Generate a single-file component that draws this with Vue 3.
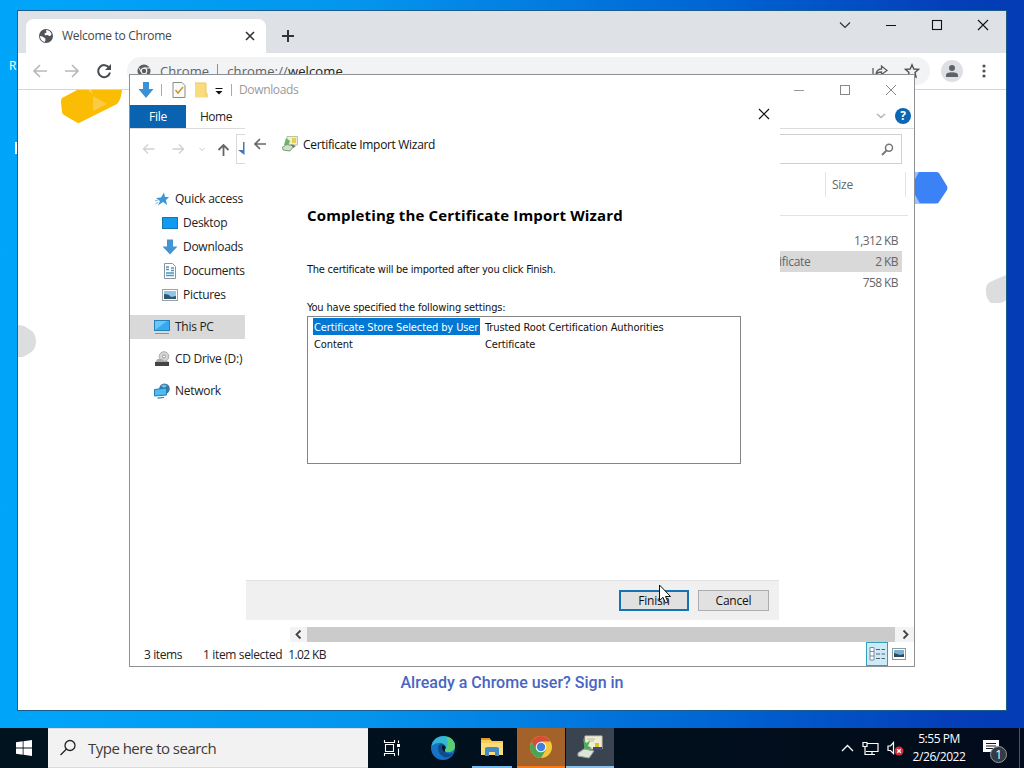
<script setup>
    import { ref } from 'vue';

    const places = ref([
    { name: 'Quick access', icon: 'star' },
    { name: 'Desktop', icon: 'desktop', child: true },
    { name: 'Downloads', icon: 'download', child: true },
    { name: 'Documents', icon: 'document', child: true },
    { name: 'Pictures', icon: 'picture', child: true },
    { name: 'This PC', icon: 'pc', active: true, gap: true },
    { name: 'CD Drive (D:)', icon: 'disc', gap: true },
    { name: 'Network', icon: 'network', gap: true }
    ]);

    const files = ref([
    { type: '', size: '1,312 KB' },
    { type: 'ificate', size: '2 KB', selected: true },
    { type: '', size: '758 KB' }
    ]);

    const settings = ref([
    { key: 'Certificate Store Selected by User', value: 'Trusted Root Certification Authorities', selected: true },
    { key: 'Content', value: 'Certificate' }
    ]);
</script>

<template>
  <div class="desktop">
    <span class="desk-label label-r">R</span>
    <span class="desk-label label-i"></span>

    <!-- browser -->
    <section class="window browser">
      <div class="tab-strip">
        <div class="tab">
          <svg width="16" height="16" viewBox="0 0 16 16">
            <circle cx="8" cy="8" r="7" fill="#505357" />
            <path d="M2 8 Q5 8 6 9.5 Q8 10 7.4 12 L7 14 Q2 13 2 8 M8 2 Q12 2 13.5 6 Q13 8.500 11 8 L10 7 L7 7.200 L6.500 5.500 L8.500 4.500 Z" fill="#fff" />
          </svg>
          <span class="tab-title">Welcome to Chrome</span>
          <svg width="10" height="10" viewBox="0 0 10 10"><path d="M1 1 L9 9 M9 1 L1 9" stroke="#333" stroke-width="1.6" /></svg>
        </div>
        <svg class="new-tab" width="14" height="14" viewBox="0 0 14 14"><path d="M7 1 V13 M1 7 H13" stroke="#333" stroke-width="2" /></svg>
        <div class="controls">
          <svg width="12" height="12" viewBox="0 0 12 12"><path d="M1 3.500 L6 8.500 L11 3.500" fill="none" stroke="#333" stroke-width="1.2" /></svg>
          <svg width="12" height="12" viewBox="0 0 12 12"><path d="M1 6.500 H11" stroke="#111" /></svg>
          <svg width="12" height="12" viewBox="0 0 12 12"><rect x="1.500" y="1.500" width="9" height="9" fill="none" stroke="#111" stroke-width="1.100" /></svg>
          <svg width="12" height="12" viewBox="0 0 12 12"><path d="M1 1 L11 11 M11 1 L1 11" stroke="#111" stroke-width="1.100" /></svg>
        </div>
      </div>
      <div class="toolbar">
        <svg width="16" height="16" viewBox="0 0 16 16"><path d="M15 8 H2 M8 2 L2 8 L8 14" fill="none" stroke="#b9b9b9" stroke-width="1.700" /></svg>
        <svg width="16" height="16" viewBox="0 0 16 16"><path d="M1 8 H14 M8 2 L14 8 L8 14" fill="none" stroke="#b9b9b9" stroke-width="1.700" /></svg>
        <svg width="16" height="16" viewBox="0 0 16 16"><path d="M13.300 5 A6 6 0 1 0 14 9.500" fill="none" stroke="#4a4d51" stroke-width="2" /><path d="M15 1 V7 H9 Z" fill="#4a4d51" /></svg>
        <div class="omnibox">
          <svg width="14" height="14" viewBox="0 0 14 14">
            <circle cx="7" cy="7" r="6.500" fill="#5a5d61" />
            <circle cx="7" cy="7" r="2.800" fill="none" stroke="#f1f3f4" stroke-width="1.200" />
            <path d="M7 4 H13 M4.500 8.500 L2 4 M9.500 8.500 L7 13" stroke="#f1f3f4" />
          </svg>
          <span class="site">Chrome</span>
          <i class="site-line"></i>
          <span class="url">chrome://<b>welcome</b></span>
          <svg class="share" width="18" height="16" viewBox="0 0 18 16"><path d="M2 5 V14 H13 M5 11 Q6 6 10.500 6 V3 L16 7.500 L10.500 11.500 V9 Q7 9 5 11 Z" fill="none" stroke="#5a5d61" stroke-width="1.300" /></svg>
          <svg class="fav" width="16" height="16" viewBox="0 0 16 16"><path d="M8 1.800 L9.800 6 L14.500 6.400 L11 9.400 L12 14 L8 11.500 L4 14 L5 9.400 L1.500 6.400 L6.200 6 Z" fill="none" stroke="#505357" stroke-width="1.400" /></svg>
        </div>
        <div class="avatar">
          <svg width="14" height="14" viewBox="0 0 14 14"><circle cx="7" cy="4" r="3" fill="#5f6368" /><path d="M1 13 V11 Q1 8.300 7 8.300 T13 11 V13 Z" fill="#5f6368" /></svg>
        </div>
        <svg class="dots" width="4" height="14" viewBox="0 0 4 14"><circle cx="2" cy="2" r="1.600" /><circle cx="2" cy="7" r="1.600" /><circle cx="2" cy="12" r="1.600" /></svg>
      </div>
      <div class="page">
        <svg class="art" width="988" height="620" viewBox="18 90 988 620">
          <path d="M77 90 L62 98 Q61 99 61 102 L62 112 Q62 114 64 115 L76 122 Q78 124 81 122 L117 104 Q121 100 122 90 Z" fill="#fbbc04" />
          <path d="M93 96 L107 104 L93 111 Z" fill="#fccb45" />
          <path d="M88 90 L93 94 L91 90 Z" fill="#fdd469" />
          <path d="M900 172 H936 Q938 172 939 173 L947 186 Q948 188 947 190 L939 202 Q938 203.500 936 203.500 H900 Z" fill="#3b82f6" />
          <path d="M914 172 H919 L914 181 Z M914 193 L920 203.500 H914 Z" fill="#9cc1fb" />
          <path d="M18 325 L24 326 L32 331 Q36 335 36 342 Q36 349 30 353 L23 357 H18 Z" fill="#dcddde" />
          <path d="M1006 275 L990 282 Q985 285 986 292 Q986 299 991 303 H1000 Q1005 302 1006 300 Z" fill="#dcddde" />
        </svg>
        <a class="sign-in">Already a Chrome user? Sign in</a>
      </div>
    </section>

    <!-- file explorer -->
    <section class="window explorer">
      <div class="ex-title">
        <svg width="16" height="18" viewBox="0 0 16 18"><path d="M5 1 H11 V8 H15.500 L8 17 L0.500 8 H5 Z" fill="#3a91d6" /></svg>
        <i class="sep"></i>
        <svg width="14" height="16" viewBox="0 0 14 16"><path d="M1 0.500 H10 L13 3.500 V15.500 H1 Z" fill="#fafafa" stroke="#8b8b8b" /><path d="M3.500 8 L6 11 L11 5" fill="none" stroke="#c49a28" stroke-width="1.500" /></svg>
        <svg width="15" height="16" viewBox="0 0 15 16"><path d="M1 1 H12 V10 L14 12 V15.500 H1 Z" fill="#fbdc7c" /><path d="M1 1 H12 V15" fill="none" stroke="#efc75f" /></svg>
        <svg class="caret" width="8" height="8" viewBox="0 0 8 8"><path d="M0.500 1.500 H7.500" stroke="#111" /><path d="M0.500 4 H7.500 L4 7.500 Z" fill="#111" /></svg>
        <i class="sep near"></i>
        <span class="ex-name">Downloads</span>
        <div class="ex-controls">
          <svg width="12" height="12" viewBox="0 0 12 12"><path d="M1 6.500 H11" stroke="#999" /></svg>
          <svg width="12" height="12" viewBox="0 0 12 12"><rect x="1.500" y="1.500" width="9" height="9" fill="none" stroke="#888" /></svg>
          <svg width="12" height="12" viewBox="0 0 12 12"><path d="M1 1 L11 11 M11 1 L1 11" stroke="#888" /></svg>
        </div>
      </div>
      <div class="ribbon">
        <span class="file-tab">File</span>
        <span class="home-tab">Home</span>
        <div class="ribbon-end">
          <svg width="10" height="8" viewBox="0 0 10 8"><path d="M1 2 L5 5.500 L9 2" fill="none" stroke="#b4b4b4" stroke-width="1.500" /></svg>
          <span class="help">?</span>
        </div>
      </div>
      <div class="address">
        <svg width="13" height="12" viewBox="0 0 13 12"><path d="M12.500 6 H1.500 M6 1.500 L1.500 6 L6 10.500" fill="none" stroke="#d0d0d0" stroke-width="1.300" /></svg>
        <svg width="13" height="12" viewBox="0 0 13 12"><path d="M0.500 6 H11.500 M7 1.500 L11.500 6 L7 10.500" fill="none" stroke="#d0d0d0" stroke-width="1.300" /></svg>
        <svg class="recent" width="6" height="5" viewBox="0 0 6 5"><path d="M0.500 1 L3 3.500 L5.500 1" fill="none" stroke="#c4c4c4" /></svg>
        <svg width="13" height="14" viewBox="0 0 13 14"><path d="M6.500 14 V3 M1.500 8 L6.500 3 L11.500 8" fill="none" stroke="#666" stroke-width="1.800" /></svg>
        <div class="path-box">
          <svg width="8" height="16" viewBox="0 0 8 16"><path d="M7.500 1 V14 L1 9 H6 V1 Z" fill="#4674b8" /></svg>
        </div>
        <div class="search-box">
          <svg width="13" height="13" viewBox="0 0 13 13"><circle cx="8" cy="4.700" r="3.500" fill="none" stroke="#777" stroke-width="1.500" /><path d="M5.500 7.500 L1 12" stroke="#777" stroke-width="1.800" /></svg>
        </div>
      </div>
      <div class="ex-body">
        <nav class="tree">
          <div v-for="place in places" :key="place.name" class="place" :class="{ child: place.child, active: place.active, gap: place.gap }">
            <svg v-if="place.icon === 'star'" width="16" height="16" viewBox="0 0 16 16"><path d="M10 1.500 L11 6 L15 6 L12 9 L13 14 L9 11 L4 14.500 L6 10 L2 7 L7 6.500 Z" fill="#3c96d8" /><path d="M1 10 L4 9 M1.500 13 L4.500 11" stroke="#7ab9e4" /></svg>
            <svg v-else-if="place.icon === 'desktop'" width="16" height="16" viewBox="0 0 16 16"><rect x="0.500" y="2.500" width="15" height="11" fill="#119bf0" stroke="#1676b4" /></svg>
            <svg v-else-if="place.icon === 'download'" width="16" height="16" viewBox="0 0 16 16"><path d="M5 0.500 H11 V7.500 H15.500 L8 15.500 L0.500 7.500 H5 Z" fill="#4494d2" /></svg>
            <svg v-else-if="place.icon === 'document'" width="16" height="16" viewBox="0 0 16 16"><path d="M2.500 0.500 H10.500 L13.500 3.500 V15.500 H2.500 Z" fill="#fff" stroke="#8a949c" /><path d="M4 4 H7 M9 5 H12 M4 6.500 H7 M9 7.500 H12 M4 10 H12 M4 12.500 H12" stroke="#4a94c8" stroke-width="1.300" /></svg>
            <svg v-else-if="place.icon === 'picture'" width="16" height="16" viewBox="0 0 16 16"><rect x="0.500" y="2.500" width="15" height="11" fill="#fff" stroke="#98a3aa" /><rect x="2" y="4" width="12" height="8" fill="#8fc5e8" /><path d="M2 7 Q7 7 9 10 L14 9 V12 H2 Z" fill="#31576d" /></svg>
            <svg v-else-if="place.icon === 'pc'" width="16" height="16" viewBox="0 0 16 16"><rect x="0.500" y="1.500" width="15" height="10" fill="#36aaf0" stroke="#2581b7" /><path d="M1 11 L13 2 H1 Z" fill="#6bc6f8" /><path d="M1 14.500 H15" stroke="#7796a8" /></svg>
            <svg v-else-if="place.icon === 'disc'" width="16" height="16" viewBox="0 0 16 16"><circle cx="10" cy="5.500" r="4.800" fill="#d4d5d5" stroke="#aaa" /><circle cx="10" cy="5.500" r="1.500" fill="#fff" stroke="#999" /><path d="M3.500 8 H8 L10 10 H14 L15 11.500 H1 Z" fill="#ababab" /><rect x="1" y="11" width="14" height="4" fill="#444" /></svg>
            <svg v-else width="16" height="16" viewBox="0 0 16 16"><circle cx="10.500" cy="5.800" r="5.300" fill="#3579b0" /><path d="M7 3 Q10 0 13 3 L10 5 Z" fill="#7fb9dd" /><path d="M0.500 6.500 L12.500 5 V12 L0.500 13 Z" fill="#4cbcf5" stroke="#2879ac" /><path d="M3.500 15.200 L10 14.500" stroke="#2879ac" stroke-width="1.200" /></svg>
            <span>{{ place.name }}</span>
          </div>
        </nav>
        <div class="file-list">
          <div class="list-head"><span>Size</span></div>
          <div class="rows">
            <div v-for="file in files" :key="file.size" class="row" :class="{ selected: file.selected }">
              <span>{{ file.type }}</span>
              <span class="size">{{ file.size }}</span>
            </div>
          </div>
        </div>
      </div>
      <div class="scroll">
        <svg width="17" height="15" viewBox="0 0 17 15"><path d="M10.500 3.500 L6.500 7.500 L10.500 11.500" fill="none" stroke="#444" stroke-width="1.800" /></svg>
        <div class="thumb"></div>
        <svg width="19" height="15" viewBox="0 0 19 15"><path d="M8.500 3.500 L12.500 7.500 L8.500 11.500" fill="none" stroke="#444" stroke-width="1.800" /></svg>
      </div>
      <div class="status">
        <span class="count">3 items</span>
        <span class="chosen">1 item selected</span>
        <span class="weight">1.02 KB</span>
        <div class="views">
          <span class="view-on">
            <svg width="17" height="14" viewBox="0 0 17 14"><path d="M1 0.500 H5 V13 H1 Z M1 4.500 H5 M1 9 H5" fill="#fff" stroke="#7b8e98" /><path d="M7 2.500 H11 M12.500 2.500 H16 M7 7 H11 M12.500 7 H16 M7 11.500 H11 M12.500 11.500 H16" stroke="#54636b" /></svg>
          </span>
          <svg width="14" height="12" viewBox="0 0 14 12"><rect x="0.500" y="0.500" width="13" height="11" fill="#fff" stroke="#8b9ba6" /><rect x="2" y="2" width="10" height="7" fill="#7aaed2" /><path d="M2 5 L8 7 L12 6 V9 H2 Z" fill="#2c4a59" /></svg>
        </div>
      </div>
    </section>

    <!-- certificate wizard -->
    <section class="window wizard">
      <div class="wiz-close">
        <svg width="12" height="12" viewBox="0 0 12 12"><path d="M1 1 L11 11 M11 1 L1 11" stroke="#111" stroke-width="1.200" /></svg>
      </div>
      <div class="wiz-title">
        <svg width="14" height="12" viewBox="0 0 14 12"><path d="M13 6 H2 M7 1 L2 6 L7 11" fill="none" stroke="#666" stroke-width="1.700" /></svg>
        <svg class="wiz-icon" width="16" height="16" viewBox="0 0 16 16">
          <path d="M5 0.500 H15.500 V9 H5 Z" fill="#eef0d0" stroke="#b9c4a5" />
          <path d="M10 2 H14 V7 H10 Z" fill="#e5cf57" />
          <path d="M4 2 L8 5 L6 10 L2 9 Z" fill="#6bb567" />
          <path d="M0.500 11 L5 8.500 L12 10 L8 15 L1 14 Z" fill="#d3ddd0" stroke="#78a07a" />
          <path d="M9 8 L14 10 L11 12 Z" fill="#6f805f" />
        </svg>
        <span>Certificate Import Wizard</span>
      </div>
      <div class="wiz-body">
        <h2>Completing the Certificate Import Wizard</h2>
        <p class="info">The certificate will be imported after you click Finish.</p>
        <p class="caption">You have specified the following settings:</p>
        <div class="settings">
          <div v-for="item in settings" :key="item.key" class="setting">
            <span class="key"><span :class="{ picked: item.selected }">{{ item.key }}</span></span>
            <span>{{ item.value }}</span>
          </div>
        </div>
      </div>
      <div class="wiz-footer">
        <button class="finish" type="button">Finish</button>
        <button type="button">Cancel</button>
      </div>
    </section>

    <footer class="taskbar">
      <div class="start">
        <svg width="16" height="16" viewBox="0 0 16 16"><path d="M0 2.300 L6.700 1.300 V7.500 H0 Z M7.500 1.200 L16 0 V7.500 H7.500 Z M0 8.400 H6.700 V14.700 L0 13.700 Z M7.500 8.400 H16 V16 L7.500 14.800 Z" fill="#fff" /></svg>
      </div>
      <div class="search">
        <svg width="18" height="18" viewBox="0 0 18 18"><circle cx="11" cy="6.500" r="5" fill="none" stroke="#222" stroke-width="1.300" /><path d="M7.500 10 L1.500 16" stroke="#222" stroke-width="1.300" /></svg>
        <span>Type here to search</span>
      </div>
      <div class="task">
        <svg width="18" height="16" viewBox="0 0 18 16"><path d="M1.500 0 V2.500 H11.500 V0 M1.500 16 V13.500 H11.500 V16 M2.500 4.500 H10.500 V11.500 H2.500 Z M15.500 0.500 V3 M15.500 8.500 V15.500" fill="none" stroke="#fff" stroke-width="1.100" /><rect x="14" y="4" width="3" height="3" fill="#fff" /></svg>
      </div>
      <div class="task edge">
        <svg width="24" height="24" viewBox="0 0 24 24">
          <circle cx="12" cy="12" r="12" fill="#1672c4" />
          <path d="M0.500 10 Q3 0 13 0 Q24 1 24 11 Q23 16 17 16 Q14 16 14 14 Q16 9 11 7 Q5 6 0.500 10 Z" fill="#35b7d3" />
          <path d="M15 0.500 Q24 2 24 11 Q23 16 17 16 Q14 16 14 14 Q19 9 15 0.500 Z" fill="#59cf73" />
          <path d="M7 12 Q7 8 11 8 Q15 9 14.500 12 Q13 14 14 16 Q17 19 22 17 Q18 23 13 21 Q7 18 7 12 Z" fill="#124b87" />
          <path d="M11 10 Q15 9 14.500 12 Q13 14 14 16 Q11 15 11 10 Z" fill="#001522" />
        </svg>
      </div>
      <div class="task line">
        <svg width="22" height="20" viewBox="0 0 22 20"><path d="M0 2 H9 L11 4 H22 V17 H0 Z" fill="#f7cd58" /><path d="M0 1 H9 V3 H0 Z" fill="#df9d25" /><path d="M0 6 H22 V18 H0 Z" fill="#fbdc7b" /><path d="M4 11 L6 10 H16 L18 11 V19 H14 V15 H8 V19 H4 Z" fill="#438bc6" /></svg>
      </div>
      <div class="task chrome">
        <svg width="22" height="22" viewBox="0 0 22 22">
          <circle cx="11" cy="11" r="11" fill="#f6c63b" />
          <path d="M1.500 5.500 A11 11 0 0 1 20.500 5.500 H11 L6 14 Z" fill="#d94b3b" />
          <path d="M1.500 5.500 A11 11 0 0 0 11 22 L16 13.500 L6.300 13.800 Z" fill="#48a557" />
          <circle cx="11" cy="11" r="5.300" fill="#f4f6fb" />
          <circle cx="11" cy="11" r="4.200" fill="#4380dc" />
        </svg>
      </div>
      <div class="task cert">
        <svg width="26" height="24" viewBox="0 0 26 24">
          <path d="M8 1 H25 V14 H8 Z" fill="#eeeed8" stroke="#c8c8aa" />
          <path d="M10 4 H18 M11 6 H17" stroke="#b7bd9b" />
          <path d="M18 8 H22 V14 H18 Z" fill="#ddbf2a" />
          <path d="M16 12 H25 V15 H16 Z" fill="#42457f" />
          <path d="M6 3 L9 8 L13 6 L11 11 L15 13 L8 16 Z" fill="#4ead57" />
          <path d="M1 18 L7 14 L17 16 L12 23 L1 21 Z" fill="#dfe4dd" stroke="#95a497" />
        </svg>
      </div>
      <div class="tray">
        <svg width="13" height="8" viewBox="0 0 13 8"><path d="M1 7 L6.500 1.500 L12 7" fill="none" stroke="#fff" stroke-width="1.300" /></svg>
        <svg width="17" height="15" viewBox="0 0 17 15"><path d="M5 2.500 H16 V10.500 H4 M10 10.500 V13.500 M6 13.500 H13 M1 1.500 H5 V5.500 H1 Z M3 5.500 V13.500 H6" fill="none" stroke="#fff" stroke-width="1.200" /></svg>
        <svg width="17" height="15" viewBox="0 0 17 15"><path d="M1 5 H3.500 L6.500 1.500 V12.500 L3.500 9.500 H1 Z" fill="none" stroke="#fff" stroke-width="1.200" /><circle cx="12" cy="10" r="4.500" fill="#d1303c" /><path d="M10.200 8.200 L13.800 11.800 M13.800 8.200 L10.200 11.800" stroke="#fff" stroke-width="1.300" /></svg>
      </div>
      <div class="clock">
        <span>5:55 PM</span>
        <span class="date">2/26/2022</span>
      </div>
      <div class="notes">
        <svg width="16" height="16" viewBox="0 0 16 16"><path d="M0 0 H16 V12 H13 L10 15.500 V12 H0 Z" fill="#fff" /><path d="M3 3.500 H13 M3 6 H13 M3 8.500 H10" stroke="#111a26" /></svg>
        <span class="badge">1</span>
      </div>
      <i class="peek"></i>
    </footer>

    <svg class="cursor" width="14" height="21" viewBox="0 0 14 21"><path d="M1.500 1 V16.500 L5 13.300 L7.500 19 L10 18 L7.500 12.500 H12.500 Z" fill="#fff" stroke="#111" /></svg>
  </div>
</template>

<style>
  body {
    margin: 0;
  }
</style>

<style scoped>
  .desktop {
    position: relative;
    width: 1024px;
    height: 768px;
    overflow: hidden;
    display: flex;
    flex-direction: column;
    justify-content: flex-end;
    background: linear-gradient(90deg, #00a6fa 0%, #0495ee 35%, #0062d2 72%, #043fb9 92%, #033cb4 100%);
    font-family: "Open Sans", "Noto Sans", sans-serif;
    font-size: 12px;
    letter-spacing: -0.28px;
    color: #222;
  }

  svg {
    display: block;
    flex-shrink: 0;
  }

  .desk-label {
    position: absolute;
    color: #fff;
  }

  .label-r {
    left: 9px;
    top: 57px;
  }

  .label-i {
    left: 15px;
    top: 142px;
    width: 2px;
    height: 12px;
    background: #fff;
  }

  .window {
    position: absolute;
    box-sizing: border-box;
    display: flex;
    flex-direction: column;
    background: #fff;
  }

  /* browser */
  .browser {
    left: 17px;
    top: 10px;
    width: 990px;
    height: 701px;
    border: 1px solid #1b5c8c;
  }

  .tab-strip {
    display: flex;
    height: 42px;
    background: #dee1e6;
    padding-left: 8px;
  }

  .tab {
    display: flex;
    align-items: center;
    box-sizing: border-box;
    width: 240px;
    height: 34px;
    margin-top: 8px;
    padding: 0 11px 0 12px;
    background: #fff;
    border-radius: 8px 8px 0 0;
  }

  .tab-title {
    flex: 1;
    margin-left: 8px;
    padding-bottom: 2px;
    color: #454749;
  }

  .new-tab {
    margin: 18px 0 0 15px;
  }

  .controls {
    display: flex;
    gap: 34px;
    margin: 8px 17px 0 auto;
  }

  .toolbar {
    display: flex;
    align-items: center;
    height: 36px;
    padding-left: 14px;
    border-bottom: 1px solid #d4d6d8;
    gap: 16px;
  }

  .omnibox {
    display: flex;
    align-items: center;
    box-sizing: border-box;
    width: 803px;
    height: 28px;
    margin-left: -1px;
    padding: 0 10px;
    border-radius: 14px;
    background: #f1f3f4;
    font-size: 13px;
    color: #5f6368;
  }

  .site {
    margin-left: 9px;
    letter-spacing: 0.1px;
  }

  .site-line {
    width: 1px;
    height: 15px;
    margin: 0 9px 0 8px;
    background: #8a8d91;
  }

  .url {
    letter-spacing: 0.12px;
  }

  .url b {
    font-weight: 400;
    color: #222;
  }

  .share {
    margin-left: auto;
  }

  .fav {
    margin-left: 15px;
  }

  .avatar {
    display: flex;
    align-items: center;
    justify-content: center;
    width: 22px;
    height: 22px;
    margin-left: -5px;
    border-radius: 50%;
    background: #dee0e6;
  }

  .dots {
    margin-left: 3px;
    fill: #505357;
  }

  .page {
    position: relative;
    flex: 1;
    display: flex;
    align-items: flex-end;
    justify-content: center;
  }

  .art {
    position: absolute;
    left: 0;
    top: 0;
  }

  .sign-in {
    margin-bottom: 17px;
    font: 500 16px/20px Roboto, sans-serif;
    letter-spacing: 0;
    color: #4765c2;
  }

  /* explorer */
  .explorer {
    left: 129px;
    top: 74px;
    width: 786px;
    height: 593px;
    border: 1px solid #8d9196;
  }

  .ex-title {
    display: flex;
    align-items: center;
    height: 29px;
    padding: 0 0 1px 8px;
  }

  .sep {
    width: 1px;
    height: 12px;
    margin: 0 10px 0 7px;
    background: #aaa;
  }

  .ex-title svg + svg {
    margin-left: 8px;
  }

  .ex-title .caret {
    margin: 2px 0 0 6px;
  }

  .sep.near {
    margin: 0 7px 0 8px;
  }

  .ex-name {
    color: #999;
    letter-spacing: -0.35px;
  }

  .ex-controls {
    display: flex;
    gap: 34px;
    margin: 0 17px 0 auto;
  }

  .ex-title .ex-controls svg {
    margin-left: 0;
  }

  .ribbon {
    display: flex;
    height: 23px;
    line-height: 23px;
    border-bottom: 1px solid #dcdcdc;
  }

  .file-tab {
    width: 56px;
    text-align: center;
    background: #0a63b1;
    color: #fff;
  }

  .home-tab {
    margin-left: 14px;
    letter-spacing: -0.9px;
    letter-spacing: -0.8px;
    letter-spacing: -0.5px;
  }

  .ribbon-end {
    display: flex;
    align-items: center;
    gap: 9px;
    margin: 0 3px 1px auto;
  }

  .help {
    width: 16px;
    height: 16px;
    border-radius: 50%;
    background: #0c66b3;
    color: #fff;
    font-weight: 700;
    line-height: 16px;
    text-align: center;
  }

  .address {
    display: flex;
    align-items: center;
    height: 40px;
    padding: 0 12px;
  }

  .address > svg + svg {
    margin-left: 17px;
  }

  .address > svg.recent {
    margin-left: 14px;
  }

  .address > .recent + svg {
    margin-left: 12px;
  }

  .path-box {
    display: flex;
    align-items: center;
    box-sizing: border-box;
    width: 60px;
    height: 30px;
    margin-left: 6px;
    border: 1px solid #d9d9d9;
  }

  .search-box {
    display: flex;
    align-items: center;
    justify-content: flex-end;
    box-sizing: border-box;
    width: 220px;
    height: 30px;
    margin-left: auto;
    padding-right: 7px;
    border: 1px solid #d0d0d0;
  }

  .ex-body {
    flex: 1;
    display: flex;
    justify-content: space-between;
  }

  .tree {
    width: 115px;
    padding-top: 18px;
  }

  .place {
    display: flex;
    align-items: center;
    height: 24px;
    padding-left: 24px;
    gap: 5px;
    white-space: nowrap;
  }

  .place span {
    padding-bottom: 2px;
  }

  .place.child {
    padding-left: 32px;
  }

  .place.gap {
    margin-top: 8px;
  }

  .active {
    background: #d9d9d9;
  }

  .file-list {
    width: 140px;
    color: #666;
  }

  .list-head {
    display: flex;
    box-sizing: border-box;
    height: 47px;
    margin-right: 6px;
    border-bottom: 1px solid #e3e3e3;
  }

  .list-head span {
    box-sizing: border-box;
    width: 81px;
    height: 25px;
    margin: 3px 2px 0 auto;
    padding-left: 6px;
    line-height: 25px;
    border: solid #e2e2e2;
    border-width: 0 1px;
  }

  .rows {
    margin: 14px 12px 0 0;
  }

  .row {
    display: flex;
    justify-content: space-between;
    padding: 0 4px 0 5px;
    line-height: 21px;
  }

  .size {
    letter-spacing: -0.6px;
  }

  .selected {
    background: #d9d9d9;
  }

  .scroll {
    display: flex;
    height: 15px;
    margin-left: 160px;
    background: #f3f3f3;
  }

  .thumb {
    flex: 1;
    background: #cbcbcb;
  }

  .status {
    display: flex;
    align-items: center;
    height: 24px;
    padding-left: 14px;
  }

  .count {
    letter-spacing: -0.4px;
  }

  .chosen {
    margin-left: 21px;
    letter-spacing: -0.36px;
  }

  .weight {
    margin-left: 6px;
    letter-spacing: -0.6px;
  }

  .views {
    display: flex;
    align-items: center;
    gap: 4px;
    margin: 0 8px 0 auto;
  }

  .view-on {
    display: flex;
    align-items: center;
    justify-content: center;
    width: 20px;
    height: 22px;
    border: 1px solid #35a0be;
    background: #cdeaf8;
  }

  /* wizard */
  .wizard {
    left: 245px;
    top: 97px;
    width: 535px;
    height: 524px;
    border: solid #fff;
    border-width: 0 1px 1px;
  }

  .wiz-close {
    display: flex;
    justify-content: flex-end;
    height: 23px;
    padding: 11px 9px 0 0;
  }

  .wiz-title {
    display: flex;
    align-items: center;
    height: 26px;
    padding: 0 0 2px 7px;
    color: #111;
  }

  .wiz-title span {
    letter-spacing: -0.32px;
  }

  .wiz-icon {
    margin: 0 5px 0 15px;
  }

  .wiz-body {
    flex: 1;
    padding: 43px 38px 0 61px;
    color: #111;
    font-family: "DejaVu Sans Condensed", "DejaVu Sans", sans-serif;
    font-size: 11px;
  }

  .wiz-body h2 {
    margin: 0;
    font: 700 15px/26px "Open Sans", sans-serif;
    letter-spacing: 0.17px;
    white-space: nowrap;
    color: #000;
  }

  .wiz-body p {
    margin: 0;
    line-height: 16px;
  }

  .wiz-body .info {
    margin-top: 34px;
    letter-spacing: -0.24px;
  }

  .wiz-body .caption {
    margin-top: 22px;
    letter-spacing: -0.15px;
  }

  .settings {
    box-sizing: border-box;
    height: 148px;
    padding: 1px 5px;
    border: 1px solid #858585;
    letter-spacing: -0.1px;
  }

  .setting {
    display: flex;
    height: 17px;
    line-height: 19px;
    white-space: nowrap;
  }

  .key {
    width: 172px;
  }

  .key span {
    display: inline-block;
    height: 17px;
    padding: 0 2px 0 1px;
  }

  .key .picked {
    background: #0078d4;
    color: #fff;
  }

  .wiz-footer {
    display: flex;
    justify-content: flex-end;
    box-sizing: border-box;
    height: 40px;
    padding: 9px 10px 0 0;
    gap: 9px;
    border-top: 1px solid #e0e0e0;
    background: #f0f0f0;
  }

  button {
    width: 71px;
    height: 21px;
    padding: 0;
    border: 1px solid #adadad;
    background: #e1e1e1;
    font-family: inherit;
    font-size: 12px;
    line-height: 18px;
    letter-spacing: -0.2px;
    color: #111;
  }

  .finish {
    width: 70px;
    border: 2px solid #1672b0;
  }

  .cursor {
    position: absolute;
    left: 658px;
    top: 584px;
  }

  /* taskbar */
  .taskbar {
    display: flex;
    height: 40px;
    background: linear-gradient(90deg, #00141f, #010e1c 70%, #020b1b);
    color: #fff;
  }

  .start {
    display: flex;
    align-items: center;
    justify-content: center;
    width: 48px;
  }

  .search {
    display: flex;
    align-items: center;
    box-sizing: border-box;
    width: 320px;
    padding-left: 11px;
    gap: 11px;
    border: 1px solid #d9dcdd;
    border-width: 1px 0;
    background: #f2f2f2;
    font-size: 15px;
    letter-spacing: -0.52px;
    color: #3b3b3b;
  }

  .task {
    display: flex;
    align-items: center;
    justify-content: center;
    box-sizing: border-box;
    width: 48px;
  }

  .edge {
    margin-left: 3px;
  }

  .line {
    width: 40px;
    margin: 0 5px;
    border-bottom: 2px solid #76b9ed;
  }

  .chrome {
    background: #a3622a;
    border-bottom: 2px solid #f57b1c;
  }

  .cert {
    margin-left: 1px;
    background: #3a4350;
    border-bottom: 2px solid #8ac0ec;
  }

  .tray {
    display: flex;
    align-items: center;
    gap: 8px;
    margin-left: auto;
  }

  .clock {
    display: flex;
    flex-direction: column;
    align-items: center;
    justify-content: center;
    width: 56px;
    margin-left: 7px;
    line-height: 18px;
    letter-spacing: -0.45px;
  }

  .notes {
    position: relative;
    display: flex;
    align-items: center;
    margin-left: 16px;
  }

  .badge {
    position: absolute;
    left: 7px;
    top: 18px;
    box-sizing: border-box;
    width: 17px;
    height: 17px;
    border: 1px solid #999;
    border-radius: 50%;
    background: #333b44;
    font-size: 12px;
    line-height: 15px;
    text-align: center;
  }

  .peek {
    width: 1px;
    margin: 0 4px 0 20px;
    background: #4b5563;
  }
</style>
